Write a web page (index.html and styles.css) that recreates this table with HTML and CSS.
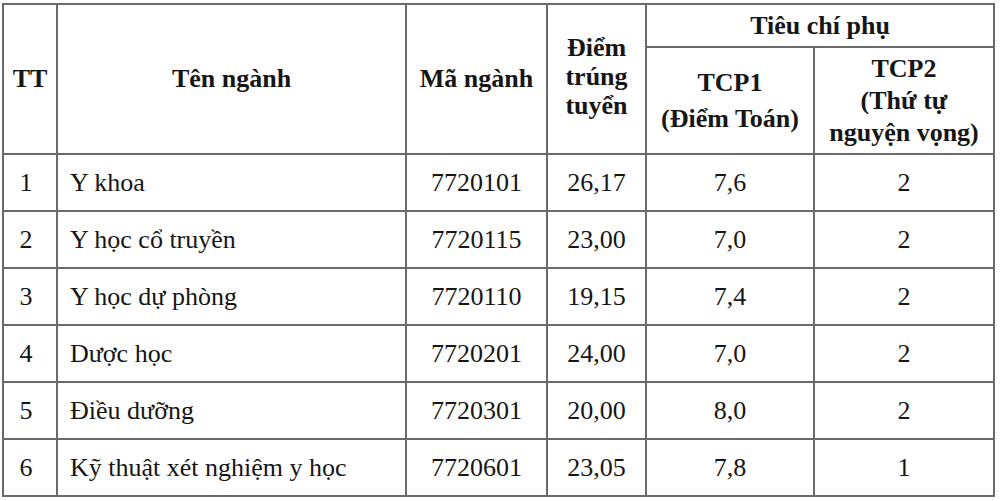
FILE: index.html
```html
<!DOCTYPE html>
<html lang="vi">
<head>
<meta charset="utf-8">
<link rel="stylesheet" href="styles.css">
</head>
<body>
<table class="scores">
  <colgroup>
    <col class="c-tt"><col class="c-name"><col class="c-code"><col class="c-score"><col class="c-tcp1"><col class="c-tcp2">
  </colgroup>
  <thead>
    <tr class="h1">
      <th rowspan="2">TT</th>
      <th rowspan="2">Tên ngành</th>
      <th rowspan="2">Mã ngành</th>
      <th rowspan="2" class="score">Điểm<br>trúng<br>tuyển</th>
      <th colspan="2">Tiêu chí phụ</th>
    </tr>
    <tr class="h2">
      <th class="tcp1">TCP1<br>(Điểm Toán)</th>
      <th class="tcp2">TCP2<br>(Thứ tự<br>nguyện vọng)</th>
    </tr>
  </thead>
  <tbody>
    <tr><td class="num">1</td><td class="name">Y khoa</td><td>7720101</td><td>26,17</td><td>7,6</td><td>2</td></tr>
    <tr><td class="num">2</td><td class="name">Y học cổ truyền</td><td>7720115</td><td>23,00</td><td>7,0</td><td>2</td></tr>
    <tr><td class="num">3</td><td class="name">Y học dự phòng</td><td>7720110</td><td>19,15</td><td>7,4</td><td>2</td></tr>
    <tr><td class="num">4</td><td class="name">Dược học</td><td>7720201</td><td>24,00</td><td>7,0</td><td>2</td></tr>
    <tr><td class="num">5</td><td class="name">Điều dưỡng</td><td>7720301</td><td>20,00</td><td>8,0</td><td>2</td></tr>
    <tr><td class="num">6</td><td class="name">Kỹ thuật xét nghiệm y học</td><td>7720601</td><td>23,05</td><td>7,8</td><td>1</td></tr>
  </tbody>
</table>
</body>
</html>
```

FILE: styles.css
```css
html, body {
  margin: 0;
  padding: 0;
  background: #ffffff;
}
body {
  padding: 3px 0 0 2px;
  font-family: "Liberation Serif", "Times New Roman", serif;
  color: #161616;
}
.scores {
  border-collapse: collapse;
  table-layout: fixed;
  width: 993px;
  font-size: 26px;
}
.c-tt { width: 54px; }
.c-name { width: 349px; }
.c-code { width: 141px; }
.c-score { width: 99px; }
.c-tcp1 { width: 168px; }
.c-tcp2 { width: 180px; }
.scores th, .scores td {
  border: 2px solid #6a6a6a;
  padding: 0;
  text-align: center;
  vertical-align: middle;
}
.scores th {
  font-weight: bold;
  line-height: 30px;
}
.scores th.score {
  line-height: 29px;
  padding-bottom: 6px;
}
.scores th.tcp1 {
  line-height: 36px;
}
.scores th.tcp2 {
  line-height: 32px;
}
.h1 th { height: 41px; }
.h2 th { height: 105px; }
.scores td {
  height: 55px;
  line-height: 28px;
}
.scores td.num {
  padding-right: 8px;
}
.scores td.name {
  text-align: left;
  padding-left: 12px;
}
```
